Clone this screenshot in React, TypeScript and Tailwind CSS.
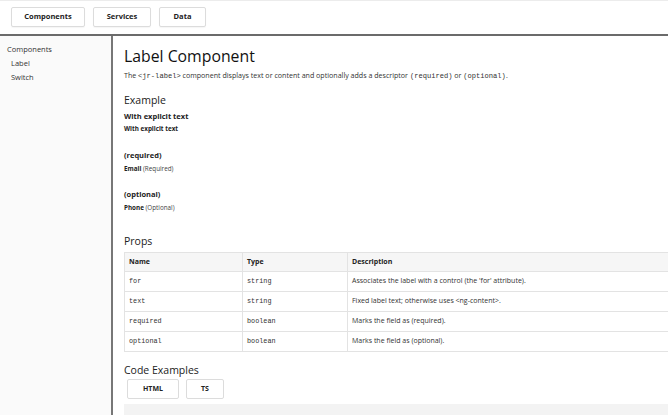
import React from 'react';

const sans = { fontFamily: '"Open Sans", "Noto Sans", sans-serif' };

const props = [
  { name: 'for', type: 'string', desc: "Associates the label with a control (the 'for' attribute)." },
  { name: 'text', type: 'string', desc: 'Fixed label text; otherwise uses <ng-content>.' },
  { name: 'required', type: 'boolean', desc: 'Marks the field as (required).' },
  { name: 'optional', type: 'boolean', desc: 'Marks the field as (optional).' },
];

function NavButton({ label, w }: { label: string; w: string }) {
  return (
    <button
      className={`h-5 ${w} rounded-[2px] border border-[#dcdcdc] bg-white text-[7.5px] font-bold text-[#222] shadow-[0_1px_1px_rgba(0,0,0,0.04)]`}
    >
      {label}
    </button>
  );
}

export default function App() {
  return (
    <div className="flex h-[415px] w-[668px] flex-col overflow-hidden bg-white text-[#222]" style={sans}>
      {/* Header */}
      <header className="flex h-[36px] shrink-0 items-center gap-2 border-t border-b-2 border-t-[#ececec] border-b-[#6b6b6b] px-[11px] pb-[1px]">
        <NavButton label="Components" w="w-[74px]" />
        <NavButton label="Services" w="w-[58px]" />
        <NavButton label="Data" w="w-[47px]" />
      </header>

      <div className="flex min-h-0 flex-1">
        {/* Sidebar */}
        <aside className="w-[113px] shrink-0 border-r-2 border-[#777] bg-[#fafafa] pt-[6px] text-[7.5px] leading-[14px]">
          <div className="pl-[7px] text-[#333]">Components</div>
          <div className="pl-[11px] text-[#333]">Label</div>
          <div className="pl-[11px] text-[#333]">Switch</div>
        </aside>

        {/* Main */}
        <main className="min-w-0 flex-1 pl-[11px] pt-[10px]">
          <h1 className="text-[15.8px] leading-[20px] font-normal text-[#111]">Label Component</h1>
          <p className="mt-[3px] whitespace-nowrap text-[7.1px] leading-[12px] text-[#333]">
            The <code className="font-['Liberation_Mono',monospace] text-[7.1px]">&lt;jr-label&gt;</code> component displays text or
            content and optionally adds a descriptor{' '}
            <code className="font-['Liberation_Mono',monospace] text-[7.1px]">(required)</code> or{' '}
            <code className="font-['Liberation_Mono',monospace] text-[7.1px]">(optional)</code>.
          </p>

          <h2 className="mt-[11px] text-[10.5px] leading-[14px] text-[#222]">Example</h2>
          <div className="mt-[3px] text-[7.5px] leading-[12px] font-bold">With explicit text</div>
          <div className="mt-[1px] text-[6.3px] leading-[12px] font-bold">With explicit text</div>

          <div className="mt-[14px] text-[7.5px] leading-[12px] font-bold">(required)</div>
          <div className="mt-[2px] text-[6.3px] leading-[12px]">
            <span className="font-bold">Email</span> <span className="text-[#444]">(Required)</span>
          </div>

          <div className="mt-[13px] text-[7.5px] leading-[12px] font-bold">(optional)</div>
          <div className="mt-[2px] text-[6.3px] leading-[12px]">
            <span className="font-bold">Phone</span> <span className="text-[#444]">(Optional)</span>
          </div>

          <h2 className="mt-[20px] text-[10.5px] leading-[14px] text-[#222]">Props</h2>
          <table className="mt-[4px] w-[560px] border-collapse text-[7px]">
            <thead>
              <tr className="h-[19px] bg-[#f6f6f6]">
                <th className="w-[118px] border border-[#e3e3e3] pl-[4px] text-left font-bold">Name</th>
                <th className="w-[105px] border border-[#e3e3e3] pl-[4px] text-left font-bold">Type</th>
                <th className="border border-[#e3e3e3] pl-[4px] text-left font-bold">Description</th>
              </tr>
            </thead>
            <tbody>
              {props.map((p) => (
                <tr key={p.name} className="h-[20px]">
                  <td className="border border-[#e3e3e3] pl-[4px] font-['Liberation_Mono',monospace] text-[6.8px] text-[#333]">{p.name}</td>
                  <td className="border border-[#e3e3e3] pl-[4px] font-['Liberation_Mono',monospace] text-[6.8px] text-[#333]">{p.type}</td>
                  <td className="border border-[#e3e3e3] pl-[4px] text-[#333]">{p.desc}</td>
                </tr>
              ))}
            </tbody>
          </table>

          <h2 className="mt-[11px] text-[10.5px] leading-[14px] text-[#222]">Code Examples</h2>
          <div className="mt-[2px] flex gap-[7px] pl-[3px]">
            <button className="h-5 w-[52px] rounded-[2px] border border-[#dcdcdc] bg-white text-[7px] font-bold">HTML</button>
            <button className="h-5 w-[38px] rounded-[2px] border border-[#dcdcdc] bg-white text-[7px] font-bold">TS</button>
          </div>
          <div className="mt-[5px] h-[40px] w-[560px] bg-[#f3f3f3]" />
        </main>
      </div>
    </div>
  );
}
